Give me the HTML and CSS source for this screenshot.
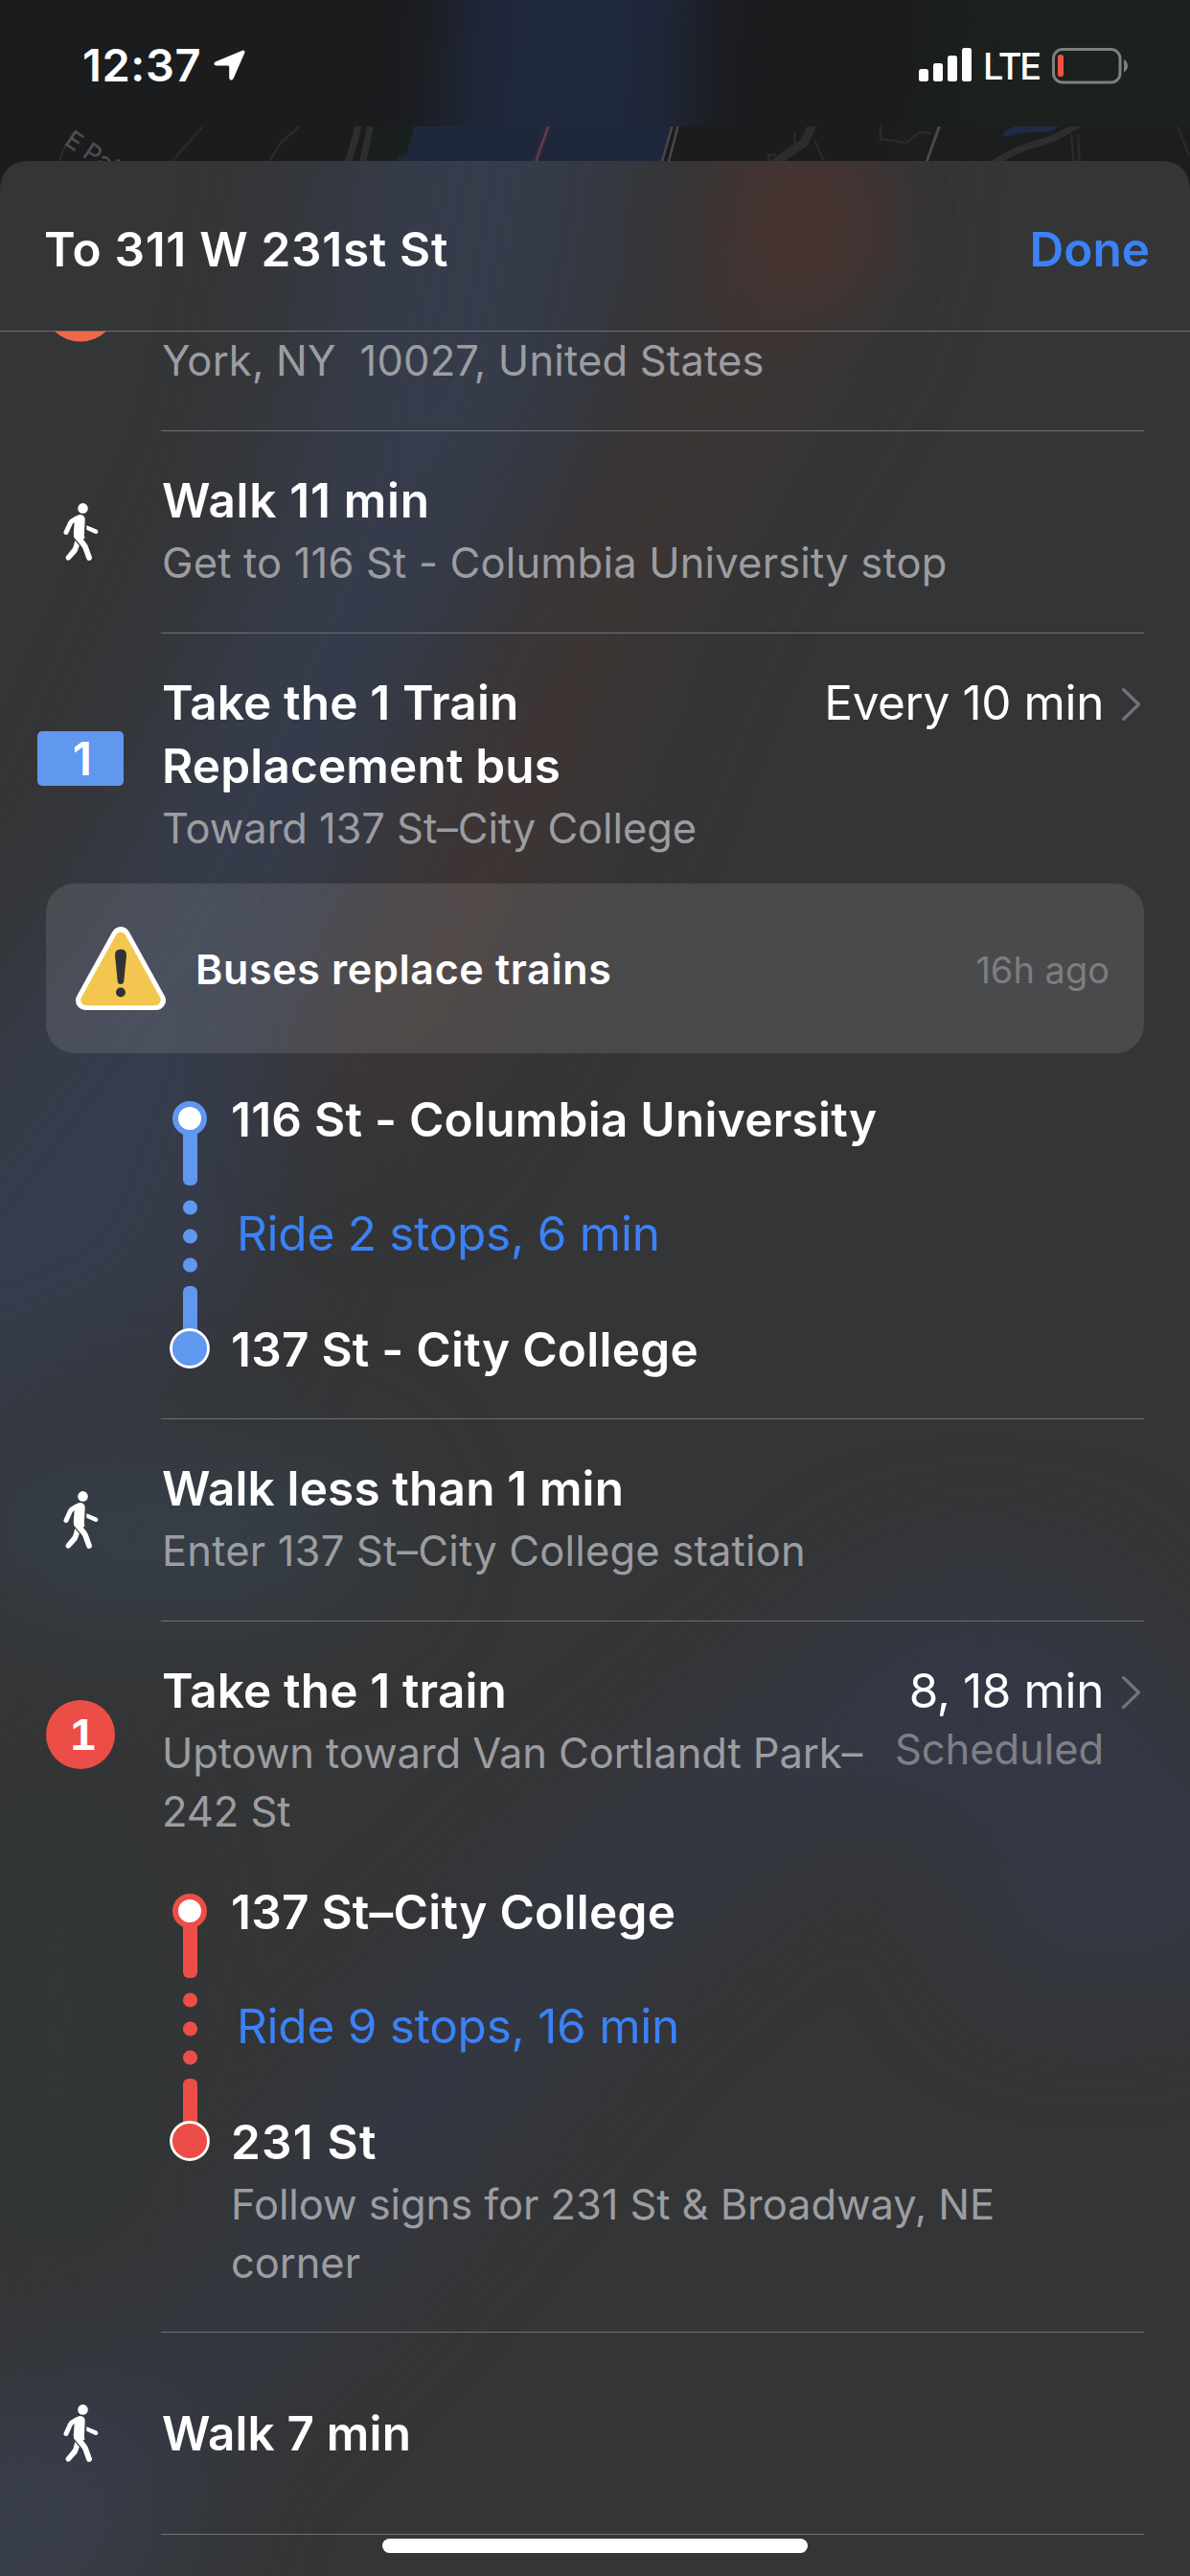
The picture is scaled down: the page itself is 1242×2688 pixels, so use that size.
FILE: index.html
```html
<!DOCTYPE html>
<html lang="en">
<head>
<meta charset="utf-8">
<title>Directions</title>
<link rel="stylesheet" href="styles.css">
</head>
<body>
<svg class="defs" width="0" height="0" aria-hidden="true">
  <symbol id="walker" viewBox="0 0 37 60">
    <circle cx="20.500" cy="5.400" r="5.300" fill="#fff"/>
    <path d="M17.500 14.800L10 18.300Q8.200 19.200 7.300 21L3 30.500" fill="none" stroke="#fff" stroke-width="5" stroke-linecap="round" stroke-linejoin="round"/>
    <path d="M24.300 23.200L34.900 27.600Q37 28.800 36.200 30.700Q35.200 32.500 33 31.700L24.300 27.800Z" fill="#fff"/>
    <path d="M9 16.500Q14 12.300 18 12.300Q22.600 12.500 22.700 17L22 31.500Q21.600 34.500 22.500 36.500L17 40L12.200 36.500Q10.400 34.500 10.800 31.500L11.600 20.500Z" fill="#fff"/>
    <path d="M14 34.500L20.800 42.500Q23.200 45.300 24 48.500L27 57" fill="none" stroke="#fff" stroke-width="5.800" stroke-linecap="round" stroke-linejoin="round"/>
    <path d="M12.300 39L16.800 44.300L15 49.500Q14.400 51 13.200 52.200L7.300 58.800Q5 60.600 3.200 58.800Q1.800 57 3.400 55L9.500 47.500Q10.300 46.500 10.700 45Z" fill="#fff"/>
  </symbol>
  <symbol id="line" viewBox="0 0 42 300">
    <rect x="14" y="40" width="15" height="62" rx="6" fill="currentColor"/>
    <circle cx="21" cy="32" r="18" fill="currentColor"/>
    <circle cx="21" cy="32" r="12" fill="#fff"/>
    <circle cx="21.500" cy="125" r="7.600" fill="currentColor"/>
    <circle cx="21.500" cy="155" r="7.600" fill="currentColor"/>
    <circle cx="21.500" cy="185" r="7.600" fill="currentColor"/>
    <rect x="14" y="207" width="15" height="60" rx="6" fill="currentColor"/>
    <circle cx="21" cy="272" r="19.500" fill="currentColor" stroke="#fff" stroke-width="2.800"/>
  </symbol>
  <symbol id="chevron" viewBox="0 0 22 36">
    <path d="M2.500 2.500L18.500 18L2.500 33.500" fill="none" stroke="#727377" stroke-width="3.200" stroke-linecap="round" stroke-linejoin="round"/>
  </symbol>
</svg>

<div class="phone">
  <svg class="backdrop" viewBox="0 0 1242 2688" width="1242" height="2688" aria-hidden="true">
    <defs>
      <filter id="soft" x="-50%" y="-50%" width="200%" height="200%" color-interpolation-filters="sRGB"><feGaussianBlur stdDeviation="65"/></filter>
      <filter id="haze" x="-50%" y="-50%" width="200%" height="200%" color-interpolation-filters="sRGB"><feGaussianBlur stdDeviation="32"/></filter>
      <clipPath id="strip"><rect x="0" y="132" width="1242" height="80"/></clipPath>
      <clipPath id="sheetShape"><path d="M0 200Q0 168 32 168H1210Q1242 168 1242 200V2688H0Z"/></clipPath>
    </defs>
    <rect width="1242" height="220" fill="#1b1c1e"/>
    <path d="M490 -200H735L705 350H445Z" fill="#20283c" filter="url(#haze)"/>
    <path d="M1000 -200H1500V350H960Z" fill="#1c211f" filter="url(#haze)"/>
    <g clip-path="url(#strip)">
      <rect y="132" width="1242" height="80" fill="#1b1c1d"/>
      <rect x="930" y="132" width="312" height="80" fill="#1b1e1d"/>
      <path d="M388 132H432L424 164L415 168V172H382Z" fill="#19201e"/>
      <path d="M432 132H702L690 172H415V164L424 162Z" fill="#1f283b"/>
      <g fill="none" stroke="#292a2b" stroke-width="2.500">
        <path d="M69 150L60 172M212 132L176 172M312 132L292 150L279 172"/>
        <path d="M919 132V145L946 149L960 138L972 139M850 146L861 170M830 138L829 150M1118 140L1121 172M1125 140L1127 172M1229 132L1241 162M802 172V162H810"/>
        <path d="M374 130Q370 150 362 172M387 130L378 172" stroke="#2e2e2f" stroke-width="7"/>
        <path d="M848 130L840 148L806 172" stroke="#2c2c2d" stroke-width="9"/>
        <path d="M1126 130Q1100 146 1078 151Q1056 158 1036 171" stroke="#2d2e2e" stroke-width="7"/>
        <path d="M702 130L690 172M708 130L697 172" stroke="#47484a"/>
        <path d="M981 130L966 172" stroke="#48494a" stroke-width="3"/>
        <path d="M573 130L558 172" stroke="#2c2c3a" stroke-width="6"/>
        <path d="M573 130L558 172" stroke="#6e3d49" stroke-width="2"/>
      </g>
      <path d="M1048 143V138L1058 132H1106L1096 137L1066 139Z" fill="#1e2a47"/>
      <text class="road" transform="translate(66 150) rotate(34)">E Palisade</text>
    </g>
    <g clip-path="url(#sheetShape)">
      <rect y="168" width="1242" height="2520" fill="#343536"/>
      <path d="M400 -100H700L610 420L400 900L220 1400L-150 1560V1240L110 900L290 500Z" fill="#363c4b" filter="url(#soft)"/>
      <path d="M770 0H910L880 300L700 600L560 960L400 1220L330 1100L560 640L710 400Z" fill="#413534" filter="url(#soft)"/>
      <ellipse cx="845" cy="235" rx="85" ry="90" fill="#4a3431" filter="url(#haze)" opacity=".7"/>
      <g filter="url(#soft)">
        <ellipse cx="170" cy="1600" rx="230" ry="80" fill="#36404b"/>
        <path d="M960 1650L1120 1660L1320 1900V2060L1080 1940L860 1880L640 2060L420 2320L180 2580L-100 2800V2520L200 2440L400 2120L640 1900Z" fill="#343846"/>
        <ellipse cx="1140" cy="2000" rx="120" ry="70" fill="#353948"/>
        <ellipse cx="60" cy="2100" rx="80" ry="240" fill="#313636"/>
        <ellipse cx="20" cy="2640" rx="170" ry="120" fill="#383e4a"/>
      </g>
    </g>
  </svg>

  <header class="status">
    <span class="clock">12:37</span>
    <svg class="locate" viewBox="0 0 33 32" width="33" height="32"><path d="M30.500 .6Q33 .4 32.300 3.200L20.600 30Q19.500 32 17.500 31.400Q16.200 30.800 16.200 29V17.800Q16.200 16.600 15 16.600H3Q.5 16.400 .4 14.800Q.3 13.200 2.200 12.300Z" fill="#fff"/></svg>
    <span class="grow"></span>
    <svg viewBox="0 0 56 36" width="56" height="36" fill="#fff"><rect x="0" y="22" width="10" height="13" rx="2.500"/><rect x="15" y="16" width="10" height="19" rx="2.500"/><rect x="30" y="8" width="10" height="27" rx="2.500"/><rect x="45" y="0" width="10" height="35" rx="2.500"/></svg>
    <span class="lte">LTE</span>
    <svg viewBox="0 0 80 38" width="80" height="38"><rect x="1.500" y="1.500" width="69.500" height="34.500" rx="9.500" fill="none" stroke="#7d807f" stroke-width="3"/><rect x="6" y="7" width="6" height="23" rx="2.500" fill="#f5513f"/><path d="M75 12Q79 14.500 79 18.800Q79 23 75 25.500Z" fill="#7d807f"/></svg>
  </header>

  <main class="sheet">
    <div class="bar">
      <h1 class="wide">To 311 W 231st St</h1>
      <a class="done">Done</a>
    </div>

    <div class="list">
      <section class="row origin">
        <svg class="icon pin" viewBox="0 0 78 11" width="78" height="11"><circle cx="39" cy="-28.500" r="39" fill="#f0684c"/></svg>
        <p class="sub">York, NY&nbsp; 10027, United States</p>
      </section>
      <hr>
      <section class="row walk">
        <svg class="icon" width="37" height="60"><use href="#walker"/></svg>
        <div><h2 class="wide">Walk 11 min</h2><p class="sub">Get to 116 St - Columbia University stop</p></div>
      </section>
      <hr>
      <section class="row bus">
        <span class="icon route">1</span>
        <div><h2>Take the 1 Train<br>Replacement bus</h2><p class="sub snug">Toward 137 St–City College</p></div>
        <div class="when"><p class="time">Every 10 min</p></div>
        <svg class="go" width="22" height="36"><use href="#chevron"/></svg>
      </section>
      <aside class="alert">
        <svg viewBox="0 0 94 88" width="94" height="88">
          <path d="M47 10L84 77H10Z" fill="#fff" stroke="#fff" stroke-width="20" stroke-linejoin="round"/>
          <path d="M47 11.500L83 76.500H11Z" fill="#f3c74f" stroke="#f3c74f" stroke-width="11.500" stroke-linejoin="round"/>
          <path d="M41 29.500Q41 23.500 47 23.500Q53 23.500 53 29.500L50.300 57Q50 60 47 60Q44 60 43.700 57Z" fill="#323335"/><circle cx="47" cy="68.500" r="5" fill="#323335"/>
        </svg>
        <strong>Buses replace trains</strong>
        <time>16h ago</time>
      </aside>
      <section class="ride blue">
        <svg width="42" height="300"><use href="#line"/></svg>
        <div>
          <h3>116 St - Columbia University</h3>
          <a class="stops">Ride 2 stops, 6 min</a>
          <h3>137 St - City College</h3>
        </div>
      </section>
      <hr>
      <section class="row walk">
        <svg class="icon" width="37" height="60"><use href="#walker"/></svg>
        <div><h2>Walk less than 1 min</h2><p class="sub">Enter 137 St–City College station</p></div>
      </section>
      <hr>
      <section class="row train">
        <span class="icon bullet">1</span>
        <div><h2>Take the 1 train</h2><p class="sub snug">Uptown toward Van Cortlandt Park–<br>242 St</p></div>
        <div class="when"><p class="time">8, 18 min</p><p class="sub snug dim">Scheduled</p></div>
        <svg class="go" width="22" height="36"><use href="#chevron"/></svg>
      </section>
      <section class="ride red">
        <svg width="42" height="300"><use href="#line"/></svg>
        <div>
          <h3>137 St–City College</h3>
          <a class="stops">Ride 9 stops, 16 min</a>
          <h3 class="wide">231 St</h3>
          <p class="sub snug">Follow signs for 231 St &amp; Broadway, NE<br>corner</p>
        </div>
      </section>
      <hr>
      <section class="row walk">
        <svg class="icon" width="37" height="60"><use href="#walker"/></svg>
        <div class="single"><h2>Walk 7 min</h2></div>
      </section>
      <hr>
    </div>
  </main>
  <div class="home"></div>
</div>
</body>
</html>
```
FILE: styles.css
```css
* { box-sizing: border-box; }
body { margin: 0; background: #1b1c1e; font-family: Inter, "Liberation Sans", sans-serif; color: #fff; }
h1, h2, h3, p, strong, time { margin: 0; }
.defs { position: absolute; }
.phone { position: relative; width: 1242px; height: 2688px; overflow: hidden; }
.backdrop { position: absolute; inset: 0; }
.road { font: 500 26px Inter, sans-serif; fill: #4c4d4f; letter-spacing: 0; }

.status { position: relative; display: flex; align-items: flex-start; height: 168px; padding: 50px 64px 0 86px; }
.status svg { flex: none; }
.clock { width: 137px; font-size: 47px; font-weight: 600; line-height: 35px; letter-spacing: 0.6px; }
.locate { margin-top: 2px; }
.grow { flex: 1; }
.lte { margin: 0 13px 0 11px; font-size: 38px; font-weight: 500; line-height: 38px; letter-spacing: -2.2px; }

.sheet { position: relative; }
.bar { display: flex; justify-content: space-between; height: 178px; padding: 59px 42px 0 46px; border-bottom: 1px solid #6d6e71; }
h1, h2, h3, .time, .stops, .done { font-size: 49.5px; line-height: 66px; font-weight: 600; letter-spacing: 0.15px; white-space: nowrap; }
.wide { letter-spacing: 0.7px; }
.done { color: #3b82f7; letter-spacing: 0; }

.sub { margin-top: 2px; font-size: 43.5px; line-height: 60.5px; letter-spacing: 0.18px; color: #9c9da1; white-space: nowrap; }
.snug { letter-spacing: -0.08px; }
hr { height: 1px; border: 0; margin: 0 48px 0 168px; background: #6e6f72; }

.row { display: grid; grid-template-columns: 168px 1fr auto auto; align-items: start; padding-right: 51px; }
.row > div, .row > .sub { padding-left: 1px; }
.icon { align-self: center; justify-self: center; }
.walk { height: 210px; }
.walk > div { padding-top: 39px; }
.walk > .single { padding-top: 72px; }
.origin { height: 103px; }
.origin .pin { align-self: start; }
.origin .sub { margin-top: 0; }
.bus { height: 261px; }
.train { height: 235px; }
.bus > div, .train > div { padding-top: 39px; }
.time { font-weight: 400; text-align: right; letter-spacing: -0.4px; }
.time + .sub { margin-top: -2px; text-align: right; }
.dim { color: #7f7f85; }
.go { margin: 56px -1px 0 18px; }

.route { display: flex; justify-content: center; width: 90px; height: 57px; padding-left: 4px; border-radius: 5px; background: #6097ef; font-size: 48px; font-weight: 600; line-height: 57px; }
.bullet { display: flex; justify-content: center; width: 72px; height: 72px; padding-left: 5px; border-radius: 50%; background: #ec4e47; font: bold 47px/72px "Liberation Sans", Arial, sans-serif; }

.alert { display: flex; align-items: center; height: 177px; margin: 0 48px; padding: 0 36px 0 31px; border-radius: 30px; background: rgba(255, 255, 255, .105); }
.alert svg { margin-top: 1px; }
.alert strong { flex: 1; padding-left: 31px; font-size: 43px; font-weight: 600; letter-spacing: 0.65px; }
.alert time { margin-top: 3px; font-size: 38px; color: #7d7e80; }

.ride { display: grid; grid-template-columns: 42px 1fr; column-gap: 22px; padding: 36px 48px 0 177px; }
.ride h3 { height: 119px; letter-spacing: 0.25px; }
.ride h3.wide { letter-spacing: 1.2px; }
.ride h3:nth-of-type(2) { height: 66px; }
.stops { display: block; height: 121px; padding-left: 6px; font-weight: 400; letter-spacing: -0.25px; color: #3b82f7; }
.blue { height: 381px; }
.blue > svg { color: #6097ef; }
.red { height: 506px; padding-top: 35px; }
.red > svg { color: #ec4e47; }

.home { position: absolute; left: 399px; top: 2649px; width: 444px; height: 15px; border-radius: 8px; background: #fff; }
```
